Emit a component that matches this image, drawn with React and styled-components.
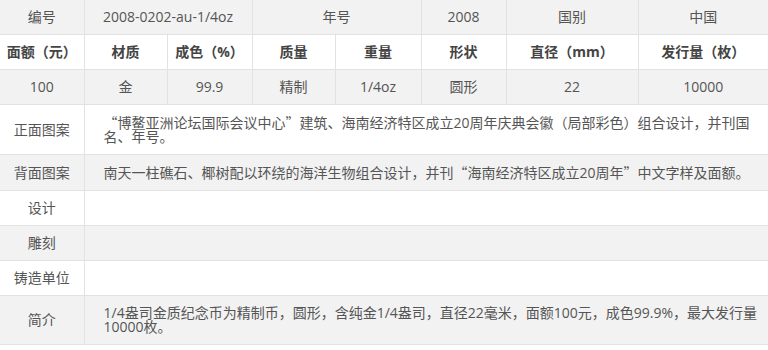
import React from "react"
import styled, { createGlobalStyle } from "styled-components"

const GlobalStyle = createGlobalStyle`
  body {
    margin: 0;
    background: #fff;
    font-family: "Open Sans", "Noto Sans CJK SC", sans-serif;
  }
`

const Table = styled.table`
  width: 768px;
  border-collapse: collapse;
  table-layout: fixed;
  font-size: 14px;
  line-height: 14px;
  color: #555;
`

const Row = styled.tr`
  background: ${p => (p.$grey ? "#f2f2f2" : "#fff")};
  border-bottom: 1px solid #e2e2e2;
`

const Cell = styled.td`
  padding: 10px ${p => (p.$text ? "6px" : "0")} 10px ${p => (p.$text ? "19px" : "0")};
  text-align: ${p => (p.$text ? "left" : "center")};
  font-weight: ${p => (p.$bold ? 700 : 400)};
  color: ${p => (p.$bold ? "#444" : "#555")};
  border-left: 1px solid #e2e2e2;
  word-break: break-all;

  &:first-child {
    border-left: none;
  }
`

const Quote = styled.span`
  font-family: "Noto Sans CJK SC", sans-serif;
`

const widths = [84, 83, 85, 83, 86, 85, 132, 130]

const head = ["面额（元）", "材质", "成色（%）", "质量", "重量", "形状", "直径（mm）", "发行量（枚）"]
const values = ["100", "金", "99.9", "精制", "1/4oz", "圆形", "22", "10000"]

const details = [
  {
    label: "正面图案",
    text: (
      <>
        <Quote>“</Quote>博鳌亚洲论坛国际会议中心<Quote>”</Quote>建筑、海南经济特区成立20周年庆典会徽（局部彩色）组合设计，并刊国名、年号。
      </>
    ),
  },
  {
    label: "背面图案",
    text: (
      <>
        南天一柱礁石、椰树配以环绕的海洋生物组合设计，并刊<Quote>“</Quote>海南经济特区成立20周年<Quote>”</Quote>中文字样及面额。
      </>
    ),
  },
  { label: "设计", text: "" },
  { label: "雕刻", text: "" },
  { label: "铸造单位", text: "" },
  {
    label: "简介",
    text: "1/4盎司金质纪念币为精制币，圆形，含纯金1/4盎司，直径22毫米，面额100元，成色99.9%，最大发行量10000枚。",
  },
]

export default function App() {
  return (
    <>
      <GlobalStyle />
      <Table>
        <colgroup>
          {widths.map((w, i) => (
            <col key={i} style={{ width: w }} />
          ))}
        </colgroup>
        <tbody>
          <Row $grey>
            <Cell>编号</Cell>
            <Cell colSpan={2}>2008-0202-au-1/4oz</Cell>
            <Cell colSpan={2}>年号</Cell>
            <Cell>2008</Cell>
            <Cell>国别</Cell>
            <Cell>中国</Cell>
          </Row>
          <Row>
            {head.map(h => (
              <Cell key={h} $bold>
                {h}
              </Cell>
            ))}
          </Row>
          <Row $grey>
            {values.map((v, i) => (
              <Cell key={i}>{v}</Cell>
            ))}
          </Row>
          {details.map((d, i) => (
            <Row key={d.label} $grey={i % 2 === 1}>
              <Cell>{d.label}</Cell>
              <Cell colSpan={7} $text>
                {d.text}
              </Cell>
            </Row>
          ))}
        </tbody>
      </Table>
    </>
  )
}
